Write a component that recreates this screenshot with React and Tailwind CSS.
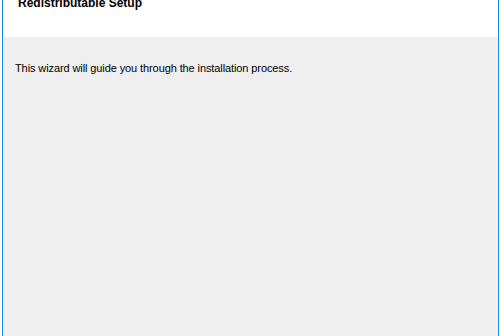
import React from 'react';

const App = () => {
  return (
    <div className="w-[501px] h-[336px] bg-white px-[2px] overflow-hidden" style={{ fontFamily: '"Liberation Sans", Arial, sans-serif' }}>
      <div className="h-full flex flex-col border-x border-[#1e88e5]">
        {/* Header */}
        <div className="h-[37px] bg-white pl-[15px]">
          <p className="text-[12px] font-bold text-black leading-none -mt-[3px]">Redistributable Setup</p>
        </div>

        {/* Body */}
        <div className="flex-1 bg-[#efefef] pl-[12px] pt-[23px]">
          <p className="text-[11px] tracking-[-0.1px] text-black">This wizard will guide you through the installation process.</p>
        </div>
      </div>
    </div>
  );
};

export default App;
